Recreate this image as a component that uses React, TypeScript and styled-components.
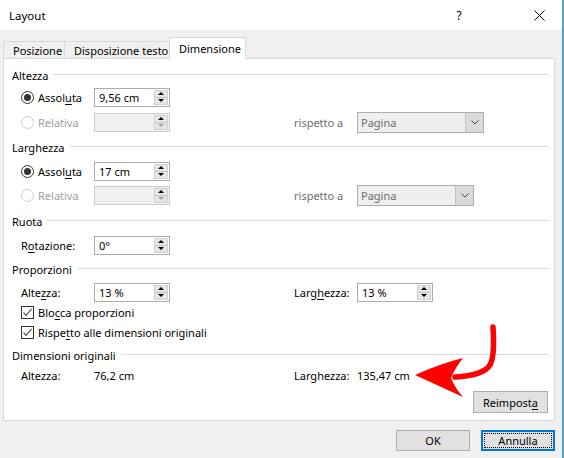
import React from 'react'
import styled, { createGlobalStyle } from 'styled-components'

const GlobalStyle = createGlobalStyle`
	html, body {
		margin: 0;
		padding: 0;
	}
	body {
		background: #f0f0f0;
		font-family: 'Noto Sans', 'Segoe UI', sans-serif;
		font-size: 11px;
		color: #000;
	}
`

const Window = styled.div`
	position: relative;
	width: 564px;
	height: 458px;
	box-sizing: border-box;
	background: #f0f0f0;
	border-right: 2px solid #48a5c8;
	display: flex;
	flex-direction: column;
`

const TitleBar = styled.div`
	height: 30px;
	background: #fff;
	display: flex;
	align-items: center;
	padding-left: 9px;
`

const Title = styled.div`
	flex: 1;
	font-size: 11.5px;
`

const CaptionButton = styled.div<{ $w: number }>`
	width: ${(p) => p.$w}px;
	height: 30px;
	display: flex;
	align-items: center;
	justify-content: center;
	font-size: 12px;
`

const TabStrip = styled.div`
	height: 28px;
	display: flex;
	align-items: flex-end;
	padding-left: 3px;
`

const Tab = styled.div<{ $w: number; $active?: boolean }>`
	position: relative;
	z-index: ${(p) => (p.$active ? 2 : 1)};
	width: ${(p) => p.$w}px;
	height: ${(p) => (p.$active ? 22 : 17)}px;
	margin-bottom: ${(p) => (p.$active ? -1 : 0)}px;
	margin-right: -1px;
	box-sizing: border-box;
	border: 1px solid #d9d9d9;
	border-bottom: none;
	background: ${(p) => (p.$active ? '#fff' : '#f0f0f0')};
	padding-left: 9px;
	display: flex;
	align-items: center;
	white-space: nowrap;
`

const Panel = styled.div`
	position: relative;
	margin-left: 3px;
	width: 552px;
	height: 363px;
	box-sizing: border-box;
	border: 1px solid #d9d9d9;
	background: #fff;
	padding: 7px 6px 7px 8px;
	display: flex;
	flex-direction: column;
`

const GroupTitle = styled.div<{ $h: number }>`
	height: ${(p) => p.$h}px;
	display: flex;
	align-items: center;
	gap: 5px;
	&::after {
		content: '';
		flex: 1;
		height: 1px;
		margin-top: -1px;
		background: #dcdcdc;
	}
`

const Row = styled.div<{ $h: number }>`
	height: ${(p) => p.$h}px;
	display: grid;
	grid-template-columns: 73px 76px 124px 63px auto;
	align-items: center;
	padding-left: 9px;
`

const Option = styled.label<{ $disabled?: boolean }>`
	display: flex;
	align-items: center;
	gap: 4px;
	color: ${(p) => (p.$disabled ? '#a0a0a0' : '#000')};
	white-space: nowrap;
`

const Wide = styled(Option)`
	grid-column: 1 / -1;
`

const Radio = styled.span<{ $checked?: boolean; $disabled?: boolean }>`
	width: 13px;
	height: 13px;
	box-sizing: border-box;
	border-radius: 50%;
	border: 1px solid ${(p) => (p.$disabled ? '#cccccc' : '#333')};
	background: #fff;
	display: flex;
	align-items: center;
	justify-content: center;
	&::after {
		content: '';
		display: ${(p) => (p.$checked ? 'block' : 'none')};
		width: 7px;
		height: 7px;
		border-radius: 50%;
		background: #333;
	}
`

const CheckBox = styled.span`
	width: 13px;
	height: 13px;
	box-sizing: border-box;
	border: 1px solid #333;
	background: #fff;
	display: flex;
	align-items: center;
	justify-content: center;
`

const Key = styled.span`
	text-decoration: underline;
	text-underline-offset: 2px;
`

const Label = styled.span<{ $muted?: boolean }>`
	color: ${(p) => (p.$muted ? '#6d6d6d' : '#000')};
	white-space: nowrap;
`

const Field = styled.div<{ $disabled?: boolean }>`
	width: 76px;
	height: 19px;
	box-sizing: border-box;
	border: 1px solid ${(p) => (p.$disabled ? '#cccccc' : '#adadad')};
	background: ${(p) => (p.$disabled ? '#f0f0f0' : '#fff')};
	display: flex;
	padding: 1px 1px 1px 0;
`

const FieldText = styled.span`
	flex: 1;
	padding-left: 4px;
	line-height: 15px;
`

const Spin = styled.div`
	width: 14px;
	display: flex;
	flex-direction: column;
	border: 1px solid #d2d2d2;
	box-sizing: border-box;
`

const SpinButton = styled.span<{ $up?: boolean; $faded?: boolean }>`
	flex: 1;
	background: #e6e6e6;
	display: flex;
	align-items: center;
	justify-content: center;
	& + & {
		border-top: 1px solid #c4c4c4;
	}
	&::after {
		content: '';
		border-left: 3px solid transparent;
		border-right: 3px solid transparent;
		${(p) => (p.$up ? 'border-bottom' : 'border-top')}: 3px solid ${(p) => (p.$faded ? '#a0a0a0' : '#000')};
	}
`

const Combo = styled.div<{ $w: number }>`
	width: ${(p) => p.$w}px;
	height: 21px;
	box-sizing: border-box;
	border: 1px solid #adadad;
	background: #efefef;
	display: flex;
`

const ComboText = styled.span`
	flex: 1;
	padding-left: 3px;
	line-height: 19px;
	color: #6d6d6d;
`

const ComboButton = styled.span`
	width: 17px;
	background: #dadada;
	border-left: 1px solid #c2c2c2;
	display: flex;
	align-items: center;
	justify-content: center;
`

const BottomRow = styled.div`
	margin-top: auto;
	display: flex;
	justify-content: flex-end;
`

const Button = styled.div<{ $w: number; $h: number; $default?: boolean }>`
	width: ${(p) => p.$w}px;
	height: ${(p) => p.$h}px;
	box-sizing: border-box;
	border: ${(p) => (p.$default ? '2px solid #0078d7' : '1px solid #adadad')};
	background: #e1e1e1;
	display: flex;
	align-items: center;
	justify-content: center;
	padding: 1px;
`

const FocusRing = styled.span`
	flex: 1;
	align-self: stretch;
	border: 1px dotted #000;
	display: flex;
	align-items: center;
	justify-content: center;
`

const Footer = styled.div`
	display: flex;
	justify-content: flex-end;
	gap: 11px;
	padding: 9px 7px 0 0;
`

const Arrow = styled.svg`
	position: absolute;
	left: 405px;
	top: 320px;
	pointer-events: none;
`

const SpinField = ({ value, disabled }: { value?: string; disabled?: boolean }) => (
	<Field $disabled={disabled}>
		<FieldText>{value}</FieldText>
		<Spin>
			<SpinButton $up />
			<SpinButton $faded={disabled} />
		</Spin>
	</Field>
)

const Select = ({ w }: { w: number }) => (
	<Combo $w={w}>
		<ComboText>Pagina</ComboText>
		<ComboButton>
			<svg width='8' height='5' viewBox='0 0 8 5'>
				<path d='M0.5 0.5 L4 4 L7.5 0.5' fill='none' stroke='#444' strokeWidth='1' />
			</svg>
		</ComboButton>
	</Combo>
)

const Check = () => (
	<CheckBox>
		<svg width='11' height='11' viewBox='0 0 11 11'>
			<path d='M1.5 5.5 L4 8.5 L9.5 2' fill='none' stroke='#333' strokeWidth='1.1' />
		</svg>
	</CheckBox>
)

const App = () => {
	return (
		<>
			<GlobalStyle />
			<Window>
				<TitleBar>
					<Title>Layout</Title>
					<CaptionButton $w={46}>?</CaptionButton>
					<div style={{ width: 34 }} />
					<CaptionButton $w={46}>
						<svg width='11' height='11' viewBox='0 0 11 11'>
							<path d='M0.5 0.5 L10.5 10.5 M10.5 0.5 L0.5 10.5' stroke='#000' strokeWidth='1' />
						</svg>
					</CaptionButton>
				</TitleBar>

				<TabStrip>
					<Tab $w={62}>Posizione</Tab>
					<Tab $w={106}>Disposizione testo</Tab>
					<Tab $w={77} $active>
						Dimensione
					</Tab>
				</TabStrip>

				<Panel>
					<GroupTitle $h={18}>Altezza</GroupTitle>
					<Row $h={26}>
						<Option>
							<Radio $checked />
							<span>
								Assol<Key>u</Key>ta
							</span>
						</Option>
						<SpinField value='9,56 cm' />
					</Row>
					<Row $h={24}>
						<Option $disabled>
							<Radio $disabled />
							<span>Relativa</span>
						</Option>
						<SpinField disabled />
						<span />
						<Label $muted>rispetto a</Label>
						<Select w={127} />
					</Row>

					<GroupTitle $h={26}>Larghezza</GroupTitle>
					<Row $h={22}>
						<Option>
							<Radio $checked />
							<span>
								Assol<Key>u</Key>ta
							</span>
						</Option>
						<SpinField value='17 cm' />
					</Row>
					<Row $h={26}>
						<Option $disabled>
							<Radio $disabled />
							<span>Relativa</span>
						</Option>
						<SpinField disabled />
						<span />
						<Label $muted>rispetto a</Label>
						<Select w={117} />
					</Row>

					<GroupTitle $h={26}>Ruota</GroupTitle>
					<Row $h={22}>
						<Label>
							R<Key>o</Key>tazione:
						</Label>
						<SpinField value='0°' />
					</Row>

					<GroupTitle $h={26}>Proporzioni</GroupTitle>
					<Row $h={20}>
						<Label>
							Alte<Key>z</Key>za:
						</Label>
						<SpinField value='13 %' />
						<span />
						<Label>
							Larg<Key>h</Key>ezza:
						</Label>
						<SpinField value='13 %' />
					</Row>
					<Row $h={20}>
						<Wide>
							<Check />
							<span>
								Blo<Key>c</Key>ca proporzioni
							</span>
						</Wide>
					</Row>
					<Row $h={20}>
						<Wide>
							<Check />
							<span>
								Rispe<Key>t</Key>to alle dimensioni originali
							</span>
						</Wide>
					</Row>

					<GroupTitle $h={26}>Dimensioni originali</GroupTitle>
					<Row $h={14}>
						<Label>Altezza:</Label>
						<Label>76,2 cm</Label>
						<span />
						<Label>Larghezza:</Label>
						<Label>135,47 cm</Label>
					</Row>

					<BottomRow>
						<Button $w={75} $h={22}>
							<span>
								Reimpost<Key>a</Key>
							</span>
						</Button>
					</BottomRow>
				</Panel>

				<Footer>
					<Button $w={74} $h={21}>
						OK
					</Button>
					<Button $w={74} $h={21} $default>
						<FocusRing>Annulla</FocusRing>
					</Button>
				</Footer>

				<Arrow width='100' height='85' viewBox='0 0 100 85'>
					<path
						d='M88 7 C89 22 89 38 85 45 C80 53 68 56 50 57'
						fill='none'
						stroke='#ff0000'
						strokeWidth='5.5'
						strokeLinecap='round'
					/>
					<path d='M10 55 Q34 44 58 38 Q50 48 46 58 Q50 68 58 77 Q34 66 10 55 Z' fill='#ff0000' />
				</Arrow>
			</Window>
		</>
	)
}

export default App
